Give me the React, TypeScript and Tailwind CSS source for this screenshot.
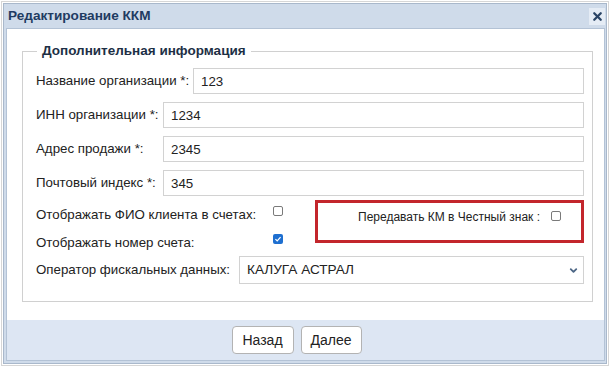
import { ChevronDown, X } from 'lucide-react';

function Check({ checked }: { checked?: boolean }) {
  if (checked) {
    return (
      <span className="flex h-[10px] w-[10px] items-center justify-center rounded-[2px] bg-[#1e6fd0]">
        <svg viewBox="0 0 10 10" className="h-[8px] w-[8px]">
          <path d="M1.8 5.2 4 7.3 8.2 2.6" fill="none" stroke="#fff" strokeWidth="1.6" />
        </svg>
      </span>
    );
  }
  return <span className="block h-[10px] w-[10px] rounded-[2px] border border-[#7a7a7a] bg-white" />;
}

function Field({ label, value, labelW }: { label: string; value: string; labelW: string }) {
  return (
    <div className="flex h-[26px] items-center">
      <span className={`${labelW} shrink-0`}>{label}</span>
      <div className="flex h-full flex-1 items-center border border-[#d2d2d2] pl-[7px] pt-[2px]">{value}</div>
    </div>
  );
}

export default function App() {
  return (
    <div className="h-[367px] w-[610px] bg-white p-px font-['Liberation_Sans',Arial,sans-serif] text-[13.3px] text-[#222]">
      <div className="h-full border border-[#d6d6d6] p-px">
        <div className="flex h-full flex-col border border-[#a9b8cb] bg-[#cfdbea] pb-[2px] pl-[2px] pr-[1px]">
          <div className="flex h-[24px] shrink-0 items-center justify-between pl-[2px] pr-0">
            <span className="text-[13.6px] font-bold text-[#1f3b62]">Редактирование ККМ</span>
            <span className="flex h-[17px] w-[16px] items-center justify-center bg-[#e5ecf5]">
              <X className="h-[13px] w-[13px] text-[#2a4466]" strokeWidth={4.2} />
            </span>
          </div>
          <div className="flex flex-1 flex-col border border-[#b3c2d5] bg-white">
            <div className="flex-1 pl-[15px] pr-[13px] pt-[12px]">
              <fieldset className="border border-[#d0d0d0] pb-[17px] pl-[13px] pr-[8px]">
                <legend className="ml-[1px] px-[5px] text-[13.5px] font-bold text-[#1d2f45]">
                  Дополнительная информация
                </legend>
                <div className="mt-[7px] flex flex-col gap-[8px]">
                  <Field label="Название организации *:" value="123" labelW="w-[157px]" />
                  <Field label="ИНН организации *:" value="1234" labelW="w-[127px]" />
                  <Field label="Адрес продажи *:" value="2345" labelW="w-[127px]" />
                  <Field label="Почтовый индекс *:" value="345" labelW="w-[127px]" />
                </div>
                <div className="mt-[3px] flex">
                  <div className="w-[276px] shrink-0">
                    <div className="flex h-[28px] items-center">
                      <span className="w-[237px] shrink-0 pt-[4px]">Отображать ФИО клиента в счетах:</span>
                      <span className="-mt-[4px]">
                        <Check />
                      </span>
                    </div>
                    <div className="flex h-[27px] items-center">
                      <span className="w-[237px] shrink-0 pt-[4px]">Отображать номер счета:</span>
                      <span className="-mt-[4px]">
                        <Check checked />
                      </span>
                    </div>
                  </div>
                  <div className="ml-[3px] mt-[1px] flex h-[43px] w-[269px] items-start justify-end border-[3px] border-[#c3262c] pr-[20px] pt-[5px]">
                    <span className="text-[12px]">Передавать КМ в Честный знак :</span>
                    <span className="ml-[11px] mt-[3px]">
                      <Check />
                    </span>
                  </div>
                </div>
                <div className="mt-[2px] flex h-[28px] items-center">
                  <span className="w-[203px] shrink-0">Оператор фискальных данных:</span>
                  <div className="flex h-full flex-1 items-center justify-between border border-[#d2d2d2] pl-[7px] pr-[4px] text-[13.6px]">
                    <span>КАЛУГА АСТРАЛ</span>
                    <ChevronDown className="h-[11px] w-[11px] text-[#4d6786]" strokeWidth={4} />
                  </div>
                </div>
              </fieldset>
            </div>
            <div className="flex h-[40px] shrink-0 items-center justify-center gap-[7px] bg-[#dde6f3] pr-[18px]">
              <button className="h-[28px] w-[62px] rounded-[4px] border border-[#b3b3b3] bg-white text-[14px]">Назад</button>
              <button className="h-[28px] w-[61px] rounded-[4px] border border-[#b3b3b3] bg-white text-[14px]">Далее</button>
            </div>
          </div>
        </div>
      </div>
    </div>
  );
}
